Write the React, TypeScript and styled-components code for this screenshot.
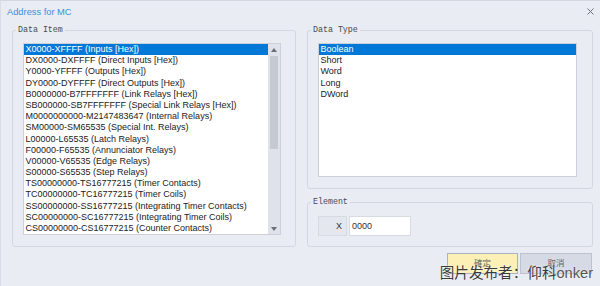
import React from "react";
import styled, { createGlobalStyle } from "styled-components";

const GlobalStyle = createGlobalStyle`
  html, body { margin: 0; padding: 0; background: #e9ecf3; }
  body { font-family: "Liberation Sans", Arial, sans-serif; }
`;

const dataItems = [
  "X0000-XFFFF (Inputs [Hex])",
  "DX0000-DXFFFF (Direct Inputs [Hex])",
  "Y0000-YFFFF (Outputs [Hex])",
  "DY0000-DYFFFF (Direct Outputs [Hex])",
  "B0000000-B7FFFFFFF (Link Relays [Hex])",
  "SB000000-SB7FFFFFFF (Special Link Relays [Hex])",
  "M0000000000-M2147483647 (Internal Relays)",
  "SM00000-SM65535 (Special Int. Relays)",
  "L00000-L65535 (Latch Relays)",
  "F00000-F65535 (Annunciator Relays)",
  "V00000-V65535 (Edge Relays)",
  "S00000-S65535 (Step Relays)",
  "TS00000000-TS16777215 (Timer Contacts)",
  "TC00000000-TC16777215 (Timer Coils)",
  "SS00000000-SS16777215 (Integrating Timer Contacts)",
  "SC00000000-SC16777215 (Integrating Timer Coils)",
  "CS00000000-CS16777215 (Counter Contacts)",
];

const dataTypes = ["Boolean", "Short", "Word", "Long", "DWord"];

const Dialog = styled.div`
  position: relative;
  box-sizing: border-box;
  width: 600px;
  height: 286px;
  background: #e9ecf3;
  border-top: 1px solid #d3d7df;
  border-left: 1px solid #dadde5;
  display: flex;
  flex-direction: column;
  overflow: hidden;
`;

const TitleBar = styled.div`
  height: 21px;
  display: flex;
  align-items: center;
  justify-content: space-between;
  padding: 0 6px 0 6px;
`;

const Title = styled.span`
  font-size: 9.3px;
  color: #3f8fdb;
  padding-top: 1px;
`;

const Body = styled.div`
  display: grid;
  grid-template-columns: 284px 286px;
  column-gap: 11px;
  padding: 8px 8px 0 11px;
`;

const Column = styled.div`
  display: flex;
  flex-direction: column;
  gap: 13px;
`;

const Group = styled.div<{ $h: number; $pad: string }>`
  position: relative;
  box-sizing: border-box;
  height: ${(p) => p.$h}px;
  border: 1px solid #d2d6df;
  border-radius: 3px;
  padding: ${(p) => p.$pad};
`;

const Legend = styled.span`
  position: absolute;
  top: -6px;
  left: 3px;
  padding: 0 2px;
  background: #e9ecf3;
  font-family: "Liberation Mono", "Courier New", monospace;
  font-size: 8.3px;
  line-height: 10px;
  color: #4a4a4a;
`;

const ListBox = styled.div<{ $w: number; $h: number }>`
  box-sizing: border-box;
  width: ${(p) => p.$w}px;
  height: ${(p) => p.$h}px;
  border: 1px solid #cbd0d9;
  background: #fff;
  display: flex;
  overflow: hidden;
`;

const Rows = styled.div`
  flex: 1;
  overflow: hidden;
`;

const Row = styled.div<{ $sel?: boolean }>`
  height: 11.2px;
  line-height: 11.2px;
  font-size: 9px;
  padding-left: 1.5px;
  white-space: nowrap;
  color: ${(p) => (p.$sel ? "#ffffff" : "#222")};
  background: ${(p) => (p.$sel ? "#0078d7" : "transparent")};
`;

const ScrollBar = styled.div`
  width: 12px;
  background: #dfe2ea;
  display: flex;
  flex-direction: column;
  align-items: center;
`;

const ArrowBtn = styled.div`
  height: 11px;
  width: 12px;
  display: flex;
  align-items: center;
  justify-content: center;
`;

const Thumb = styled.div`
  width: 8px;
  height: 93px;
  margin-top: 1px;
  background: #c4c9d2;
`;

const Spacer = styled.div`
  flex: 1;
`;

const ElementRow = styled.div`
  display: flex;
  gap: 2px;
`;

const AxisLabel = styled.div`
  box-sizing: border-box;
  width: 29px;
  height: 20px;
  border: 1px solid #d6dae2;
  background: #e4e7ee;
  font-size: 9px;
  color: #333;
  display: flex;
  align-items: center;
  justify-content: flex-end;
  padding-right: 4px;
`;

const Input = styled.div`
  box-sizing: border-box;
  width: 62px;
  height: 20px;
  border: 1px solid #d6dae2;
  background: #fff;
  font-size: 9px;
  color: #333;
  display: flex;
  align-items: center;
  padding-left: 2px;
`;

const Footer = styled.div`
  display: flex;
  justify-content: flex-end;
  gap: 2px;
  padding: 6px 8px 0 0;
`;

const Button = styled.div<{ $primary?: boolean }>`
  box-sizing: border-box;
  width: ${(p) => (p.$primary ? 71 : 72)}px;
  height: 21px;
  border: 1px solid ${(p) => (p.$primary ? "#a7b3c4" : "#bcc2ce")};
  background: ${(p) => (p.$primary ? "#fcf0b6" : "#d6dae5")};
  font-family: "Noto Sans CJK SC", sans-serif;
  font-size: 8.5px;
  color: #666;
  display: flex;
  justify-content: center;
  padding-top: 2px;
`;

const Watermark = styled.div`
  position: absolute;
  right: 7px;
  bottom: 5px;
  font-family: "Noto Sans CJK SC", sans-serif;
  font-size: 14.6px;
  line-height: 16px;
  color: #3a3a3a;
  text-shadow: 0 0 2px #fff;
  white-space: nowrap;
`;

const Latin = styled.span`
  font-family: "Liberation Sans", Arial, sans-serif;
  color: #555;
`;

const Triangle = ({ up }: { up?: boolean }) => (
  <svg width="6" height="4" viewBox="0 0 6 4">
    <path d={up ? "M0 4 L3 0 L6 4 Z" : "M0 0 L3 4 L6 0 Z"} fill="#6b6f76" />
  </svg>
);

export default function App() {
  return (
    <>
      <GlobalStyle />
      <Dialog>
        <TitleBar>
          <Title>Address for MC</Title>
          <svg width="7" height="7" viewBox="0 0 7 7">
            <path d="M0.5 0.5 L6.5 6.5 M6.5 0.5 L0.5 6.5" stroke="#6d7078" strokeWidth="1" />
          </svg>
        </TitleBar>
        <Body>
          <Group $h={217} $pad="12px 0 0 10px">
            <Legend>Data Item</Legend>
            <ListBox $w={258} $h={192}>
              <Rows>
                {dataItems.map((t, i) => (
                  <Row key={t} $sel={i === 0}>{t}</Row>
                ))}
              </Rows>
              <ScrollBar>
                <ArrowBtn><Triangle up /></ArrowBtn>
                <Thumb />
                <Spacer />
                <ArrowBtn><Triangle /></ArrowBtn>
              </ScrollBar>
            </ListBox>
          </Group>
          <Column>
            <Group $h={159} $pad="12px 0 0 10px">
              <Legend>Data Type</Legend>
              <ListBox $w={259} $h={134}>
                <Rows>
                  {dataTypes.map((t, i) => (
                    <Row key={t} $sel={i === 0}>{t}</Row>
                  ))}
                </Rows>
              </ListBox>
            </Group>
            <Group $h={45} $pad="13px 0 0 10px">
              <Legend>Element</Legend>
              <ElementRow>
                <AxisLabel>X</AxisLabel>
                <Input>0000</Input>
              </ElementRow>
            </Group>
          </Column>
        </Body>
        <Footer>
          <Button $primary>確定</Button>
          <Button>取消</Button>
        </Footer>
        <Watermark>
          图片发布者：仰科<Latin>onker</Latin>
        </Watermark>
      </Dialog>
    </>
  );
}
